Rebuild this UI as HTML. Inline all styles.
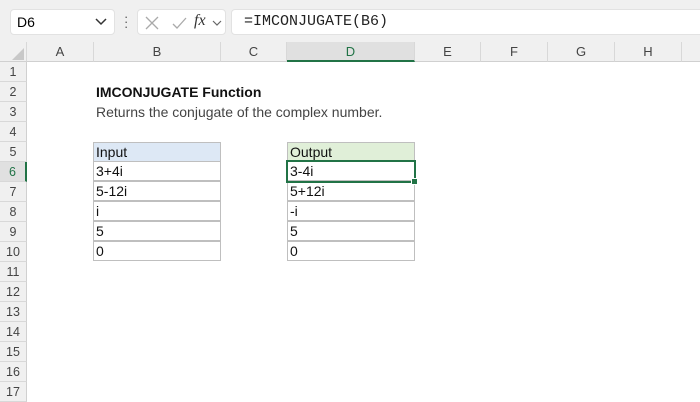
<!DOCTYPE html>
<html><head><style>
body{margin:0;width:700px;height:400px;overflow:hidden;background:#fff;font-family:"Liberation Sans",sans-serif;position:relative}
.a{position:absolute}
.bar{left:0;top:0;width:700px;height:42px;background:#f0f0f0}
.box{background:#fff;border-radius:4px;border:1px solid #e2e2e2}
.ch{top:42px;height:20px;background:#f0f0f0;border-right:1px solid #d8d8d8;border-bottom:1px solid #d0d0d0;box-sizing:border-box;text-align:center;font-size:13px;line-height:20px;color:#444}
.rh{left:0;width:27px;height:20px;background:#f0f0f0;border-bottom:1px solid #d8d8d8;border-right:1px solid #d0d0d0;box-sizing:border-box;text-align:center;font-size:12.5px;line-height:20px;color:#444}
.c{height:20px;box-sizing:border-box;border:1px solid #bfbfbf;font-size:14px;line-height:19px;padding-left:2px;color:#111}
</style></head><body>
<div class="a bar"></div>
<div class="a box" style="left:10px;top:9px;width:103px;height:24px"><span class="a" style="left:6px;top:4px;font-size:14px">D6</span><svg class="a" style="left:84px;top:8px" width="12" height="8"><path d="M1 1l5 5 5-5" stroke="#333" fill="none" stroke-width="1.5"/></svg></div>
<div class="a" style="left:124px;top:14px;font-size:13px;color:#555;line-height:5px">·<br>·<br>·</div>
<div class="a box" style="left:137px;top:9px;width:87px;height:24px">
<svg class="a" style="left:5px;top:5px" width="80" height="16"><path d="M3 2l12 12M15 2L3 14" stroke="#aaa" stroke-width="1.3"/><path d="M30 9l4 4 9-10" stroke="#aaa" fill="none" stroke-width="1.3"/><path d="M70 6l4 4 4-4" stroke="#666" fill="none" stroke-width="1.2"/></svg>
<span class="a" style="left:56px;top:2px;font-family:'Liberation Serif',serif;font-style:italic;font-size:16px;color:#333">fx</span></div>
<div class="a box" style="left:231px;top:9px;width:475px;height:24px"><span class="a" style="left:12px;top:3px;font-family:'Liberation Mono',monospace;font-size:15px;color:#222">=IMCONJUGATE(B6)</span></div>
<div class="a ch" style="left:0;width:27px;background:#f0f0f0"><svg class="a" style="left:12px;top:6px" width="12" height="12"><path d="M12 0V12H0z" fill="#c8c8c8"/></svg></div>
<div class="a ch" style="left:27px;width:67px">A</div>
<div class="a ch" style="left:94px;width:127px">B</div>
<div class="a ch" style="left:221px;width:66px">C</div>
<div class="a ch" style="left:287px;width:128px;background:#e0e0e0;color:#217346;border-bottom:2px solid #217346">D</div>
<div class="a ch" style="left:415px;width:66px">E</div>
<div class="a ch" style="left:481px;width:67px">F</div>
<div class="a ch" style="left:548px;width:67px">G</div>
<div class="a ch" style="left:615px;width:67px">H</div>
<div class="a ch" style="left:682px;width:30px"></div>
<div class="a rh" style="top:62px">1</div><div class="a rh" style="top:82px">2</div><div class="a rh" style="top:102px">3</div><div class="a rh" style="top:122px">4</div><div class="a rh" style="top:142px">5</div>
<div class="a rh" style="top:162px;background:#e0e0e0;color:#217346;border-right:2px solid #217346">6</div>
<div class="a rh" style="top:182px">7</div><div class="a rh" style="top:202px">8</div><div class="a rh" style="top:222px">9</div><div class="a rh" style="top:242px">10</div><div class="a rh" style="top:262px">11</div><div class="a rh" style="top:282px">12</div><div class="a rh" style="top:302px">13</div><div class="a rh" style="top:322px">14</div><div class="a rh" style="top:342px">15</div><div class="a rh" style="top:362px">16</div><div class="a rh" style="top:382px">17</div>
<div class="a" style="left:96px;top:84px;font-size:14px;font-weight:bold;color:#111">IMCONJUGATE Function</div>
<div class="a" style="left:96px;top:104px;font-size:14px;color:#444">Returns the conjugate of the complex number.</div>
<div class="a c" style="left:93px;top:142px;width:128px;background:#dde8f5">Input</div>
<div class="a c" style="left:93px;top:161px;width:128px">3+4i</div>
<div class="a c" style="left:93px;top:181px;width:128px">5-12i</div>
<div class="a c" style="left:93px;top:201px;width:128px">i</div>
<div class="a c" style="left:93px;top:221px;width:128px">5</div>
<div class="a c" style="left:93px;top:241px;width:128px">0</div>
<div class="a c" style="left:287px;top:142px;width:128px;background:#e0efd8">Output</div>
<div class="a c" style="left:287px;top:161px;width:128px">3-4i</div>
<div class="a c" style="left:287px;top:181px;width:128px">5+12i</div>
<div class="a c" style="left:287px;top:201px;width:128px">-i</div>
<div class="a c" style="left:287px;top:221px;width:128px">5</div>
<div class="a c" style="left:287px;top:241px;width:128px">0</div>
<div class="a" style="left:286px;top:160px;width:126px;height:19px;border:2px solid #217346"></div>
<div class="a" style="left:411px;top:178px;width:5px;height:5px;background:#217346;border:1px solid #fff"></div>
</body></html>
